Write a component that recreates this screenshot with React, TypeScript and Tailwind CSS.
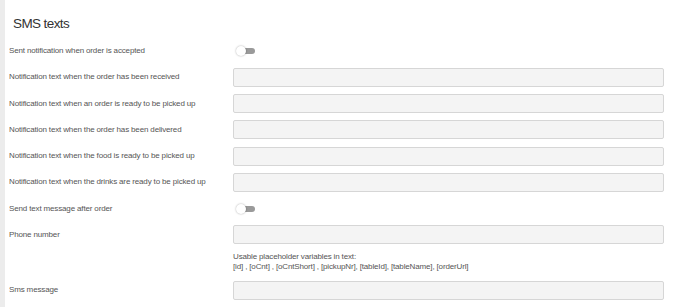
import React from "react";

const Toggle = () => (
  <div className="relative h-[10px] w-[20px]">
    <div className="absolute left-[5px] top-[2px] h-[6px] w-[14px] rounded-full bg-[#9a9a9a]" />
    <div className="absolute left-0 top-0 h-[10px] w-[10px] rounded-full bg-white shadow-[0_0_2px_rgba(0,0,0,0.35)]" />
  </div>
);

const Input = () => (
  <div className="h-[19px] w-[431px] rounded-[2px] border border-[#d6d6d6] bg-[#f4f4f4]" />
);

const Row = ({ label, children }: { label: string; children: React.ReactNode }) => (
  <div className="flex h-[26.25px] items-center">
    <div className="w-[224px] shrink-0 text-[8px] tracking-[-0.15px] text-[#555]">{label}</div>
    {children}
  </div>
);

export default function App() {
  return (
    <div
      className="flex h-[307px] w-[688px] bg-white"
      style={{ fontFamily: '"Liberation Sans", Arial, sans-serif' }}
    >
      <div className="w-[5px] shrink-0 bg-[#ececec]" />
      <div className="flex flex-col pl-[4px] pt-[14px]">
        <div className="mb-[5px] pl-[4px] pt-[1px] text-[13.5px] leading-[18px] tracking-[-0.6px] text-[#333]">SMS texts</div>
        <Row label="Sent notification when order is accepted">
          <div className="pl-[3px]"><Toggle /></div>
        </Row>
        <Row label="Notification text when the order has been received"><Input /></Row>
        <Row label="Notification text when an order is ready to be picked up"><Input /></Row>
        <Row label="Notification text when the order has been delivered"><Input /></Row>
        <Row label="Notification text when the food is ready to be picked up"><Input /></Row>
        <Row label="Notification text when the drinks are ready to be picked up"><Input /></Row>
        <Row label="Send text message after order">
          <div className="pl-[3px]"><Toggle /></div>
        </Row>
        <Row label="Phone number"><Input /></Row>
        <div className="flex pb-[5px] pt-[4px]">
          <div className="w-[224px] shrink-0" />
          <div className="text-[8px] leading-[10px] tracking-[-0.15px] text-[#555]">
            <div>Usable placeholder variables in text:</div>
            <div>[id] , [oCnt] , [oCntShort] , [pickupNr], [tableId], [tableName], [orderUrl]</div>
          </div>
        </div>
        <Row label="Sms message"><Input /></Row>
      </div>
    </div>
  );
}
